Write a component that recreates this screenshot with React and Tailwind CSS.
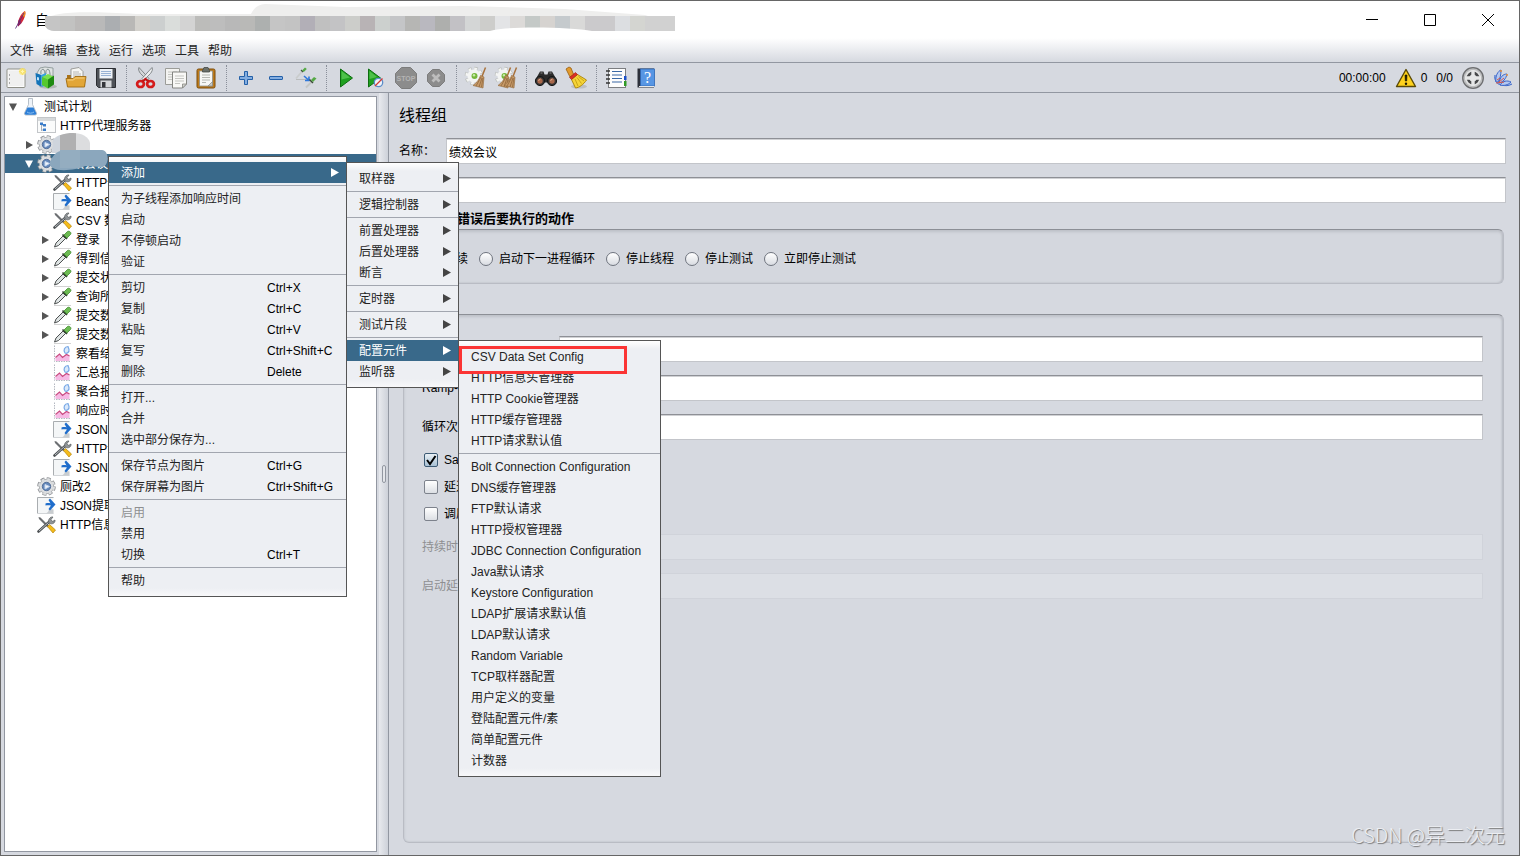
import React from 'react';

// ---------- Toolbar icons (24 x 24) ----------

const NewIcon = () => (
    <>
        <rect x="3" y="3" width="18" height="18.5" rx="1" fill="#fdfdfd" stroke="#8f9088" />
        <rect x="4.5" y="4.5" width="15" height="15.5" fill="#f0f0f0" />
        <path d="M5.5 8v2M5.5 12v2M5.5 16v2" stroke="#aaa" />
        <circle cx="18.5" cy="5.5" r="3.6" fill="#fbe97a" opacity=".8" />
        <path d="M18.5 2.5l1 2 2 1-2 1-1 2-1-2-2-1 2-1z" fill="#fff6b0" stroke="#f2d33c" strokeWidth=".6" />
    </>
);

const TemplatesIcon = () => (
    <>
        <ellipse cx="14" cy="20.5" rx="9" ry="2" fill="#9aa09a" opacity=".6" />
        <path d="M3 7l3-5 5-1 8 1v8H4z" fill="#dfe3e3" stroke="#84908f" strokeWidth=".8" />
        <path d="M7 8c-1-4 2-6 3-4s1 4 1 5M12 8c-1-4 2-6 3-4s1 4 1 5" fill="none" stroke="#7c8a8c" strokeWidth="1" />
        <path d="M1.500 7l6 2v12l-5-3z" fill="#1273b8" />
        <path d="M7 9l5-2v12l-4 2z" fill="#38a3e0" />
        <path d="M3 11l2 .6v3L3 14z" fill="#bfe2f8" />
        <path d="M8 11l6-3 6 3-6 3z" fill="#7be04e" />
        <path d="M8 11l6 2.500v9L8 19z" fill="#55c92d" />
        <path d="M14 13.500l6-4v9l-6 4z" fill="#1e8a12" />
    </>
);

const OpenIcon = () => (
    <>
        <path d="M3 9h6l1 2h11v9H3z" fill="#a9721a" />
        <path d="M7 3l8-1.500 4 4V15H7z" fill="#f6f6f4" stroke="#8b8b86" strokeWidth=".8" />
        <path d="M9 6h6M9 8h8M9 10h8" stroke="#a8a8a4" strokeWidth=".8" />
        <path d="M2 12.500h7l2-2h11l-1.500 10.500H3.500z" fill="#e2a638" stroke="#a06c12" strokeWidth=".9" />
        <path d="M3.500 14h6l2-2h9" fill="none" stroke="#f6cf7c" />
    </>
);

const SaveIcon = () => (
    <>
        <path d="M2.500 2.500h19v19h-17l-2-2z" fill="#4e5258" stroke="#2c2e33" />
        <rect x="5.500" y="3" width="13" height="9.500" fill="#eff3f8" />
        <path d="M7 5.500h10M7 7.500h10M7 9.500h10" stroke="#8facd0" strokeWidth=".9" />
        <rect x="6.500" y="14.500" width="11" height="7" fill="#d5d7da" />
        <rect x="8" y="16" width="3.500" height="5.500" fill="#34363b" />
    </>
);

const CutIcon = () => (
    <>
        <path d="M5 1.500c-1 2 0 4 1.500 6l7 7 1.500-2z" fill="#d4d7d9" stroke="#6f7476" strokeWidth=".8" />
        <path d="M18 1.500c1 2 0 4-1.500 6l-7 7-1.500-2z" fill="#eceeef" stroke="#6f7476" strokeWidth=".8" />
        <ellipse cx="6.500" cy="18" rx="3.400" ry="3" fill="none" stroke="#d41c1c" strokeWidth="2.700" />
        <ellipse cx="16.500" cy="18" rx="3.400" ry="3" fill="none" stroke="#d41c1c" strokeWidth="2.700" />
        <path d="M8.500 15.500l3-2.500 3 2.500" fill="none" stroke="#c01313" strokeWidth="2.200" />
    </>
);

const CopyIcon = () => (
    <>
        <path d="M1.500 2.500h14v16h-14z" fill="#f3f3f1" stroke="#9b9c98" />
        <path d="M4 6h9M4 8.500h9M4 11h9M4 13.500h5" stroke="#c4c5c1" />
        <path d="M8.500 6h14v12l-4 4h-10z" fill="#f8f8f6" stroke="#858682" />
        <path d="M11 10h9M11 12.500h9M11 15h9M11 17.500h5" stroke="#c4c5c1" />
        <path d="M22.500 18h-4v4z" fill="#d2d3cf" stroke="#858682" strokeWidth=".8" />
    </>
);

const PasteIcon = () => (
    <>
        <rect x="3" y="3" width="18" height="19" rx="1.500" fill="#bd7b1c" stroke="#7c4c0b" />
        <path d="M5.500 5h13v15h-13z" fill="#f7f7f5" stroke="#8e8f8a" strokeWidth=".8" />
        <path d="M8.500 4.500l1.500-3h4l1.500 3v1.500h-7z" fill="#6b706b" stroke="#454944" strokeWidth=".8" />
        <path d="M8 9h8M8 11.500h8M8 14h8M8 16.500h4" stroke="#b5b7b2" />
        <path d="M18.500 15.500v4.500H14z" fill="#c6c8c3" stroke="#858782" strokeWidth=".7" />
    </>
);

const PlusIcon = () => (
    <path d="M10.500 5.500h3v5h5v3h-5v5h-3v-5h-5v-3h5z" fill="#83ade0" stroke="#2460a8" />
);

const MinusIcon = () => <rect x="5.500" y="10.500" width="13" height="3" rx=".5" fill="#83ade0" stroke="#2460a8" />;

const ToggleIcon = () => (
    <>
        <path d="M2 12.500L8 5.500" stroke="#c9cccc" strokeWidth="1.800" />
        <path d="M2 13.500h13" stroke="#b5b8b8" strokeWidth=".9" />
        <path d="M7 4l2 2" stroke="#46513f" strokeWidth="1.300" />
        <path d="M8 4.500L11 1.500l1.800 1.500-3 3z" fill="#55a945" />
        <path d="M10 10l4.500 4M15 10.500v4h-4" stroke="#2f78dc" strokeWidth="1.600" fill="none" />
        <path d="M12 21.500l5.500-5.500" stroke="#c3c6c6" strokeWidth="2" />
        <path d="M15.500 13.500l3.500 3.500" stroke="#3c4a38" strokeWidth="1.500" />
        <path d="M17 14l3-3 2.500 1.500-3.500 3.500z" fill="#55a945" />
    </>
);

const StartIcon = () => (
    <>
        <path d="M6.500 3l12 9-12 9z" fill="#1fa01f" stroke="#0e6d10" />
        <path d="M7.500 5l8.500 6.500-8.500 2z" fill="#62cf5b" opacity=".7" />
    </>
);

const StartNoTimersIcon = () => (
    <>
        <path d="M4.500 3l12 9-12 9z" fill="#1fa01f" stroke="#0e6d10" />
        <path d="M5.500 5l7.500 6-7.500 2z" fill="#62cf5b" opacity=".7" />
        <circle cx="14.500" cy="16.500" r="4.200" fill="#eef3fa" stroke="#5b8cc8" strokeWidth="1.300" />
        <path d="M11 20l7.500-7.500" stroke="#d23a32" strokeWidth="1.300" />
    </>
);

const StopIcon = () => (
    <>
        <path d="M7.500 1.500h9l6 6v9l-6 6h-9l-6-6v-9z" fill="#8c8c8c" stroke="#7c7c7c" />
        <text x="12" y="14.500" textAnchor="middle" fontSize="7" fontWeight="bold" fontFamily="Liberation Sans, sans-serif" fill="#b4b4b4">STOP</text>
    </>
);

const ShutdownIcon = () => (
    <>
        <path d="M8.500 3.500h7l5 5v7l-5 5h-7l-5-5v-7z" fill="#8c8c8c" stroke="#7c7c7c" />
        <path d="M8.500 8.500l7 7M15.500 8.500l-7 7" stroke="#bdbdbd" strokeWidth="2.800" />
    </>
);

const Broom = () => (
    <>
        <path d="M21.500 1.500l-3.500 9" stroke="#a8713a" strokeWidth="1.500" />
        <path d="M16.500 9.500l3.500 1.500-1 11-10-2.500c4-3 6-6 7.500-10z" fill="#c79a68" stroke="#8e6436" strokeWidth=".6" />
        <path d="M17 11l-5 9M18 12l-3 9M19 12l-1.500 9" stroke="#8a6136" strokeWidth=".7" />
    </>
);

const GearSmall = () => (
    <>
        <circle cx="10" cy="10" r="7.600" fill="none" stroke="#b9bcb9" strokeWidth="3.400" strokeDasharray="3.400 2.570" />
        <circle cx="10" cy="10" r="7.300" fill="none" stroke="#f4f5f4" strokeWidth="2.600" strokeDasharray="2.800 2.933" />
        <circle cx="10" cy="10" r="6.500" fill="#f3f4f3" />
        <circle cx="10.500" cy="10" r="3" fill="#77b73c" />
        <circle cx="10" cy="9.300" r="1.200" fill="#c8ecaa" />
    </>
);

const ClearIcon = () => (
    <>
        <GearSmall />
        <Broom />
    </>
);

const ClearAllIcon = () => (
    <>
        <GearSmall />
        <g transform="translate(-5 0)">
            <Broom />
        </g>
        <g transform="translate(1 0)">
            <Broom />
        </g>
    </>
);

const SearchIcon = () => (
    <>
        <path d="M6 5.500h3.500l1 3h3l1-3H18l4.500 8v3h-21v-3z" fill="#2b2b2b" />
        <path d="M6.500 7h2M15.500 7h2" stroke="#8b8b8b" strokeWidth="1.200" />
        <circle cx="6" cy="15" r="4.600" fill="#343434" stroke="#161616" />
        <circle cx="18" cy="15" r="4.600" fill="#343434" stroke="#161616" />
        <circle cx="6" cy="15" r="2.700" fill="#a8674a" />
        <circle cx="18" cy="15" r="2.700" fill="#a8674a" />
        <path d="M4.500 14.500l2-1.500M16.500 14.500l2-1.500" stroke="#e3b69c" />
    </>
);

const ClearSearchIcon = () => (
    <>
        <ellipse cx="15" cy="20.500" rx="8" ry="2" fill="#999" opacity=".4" />
        <path d="M2 3l3-2 2 1 2 5 1 2-4 2-2-4z" fill="#e39b2c" stroke="#985d10" strokeWidth=".8" />
        <path d="M7.500 13.500l6-5 9 5.500c-3 4.500-7 7.500-11 8z" fill="#f5d437" stroke="#a98208" strokeWidth=".9" />
        <path d="M11 13l3 7M13 11.500l4.500 6M14.500 10.500l5.500 4.500" stroke="#c49f15" strokeWidth=".9" />
        <path d="M5.500 11.500l6-5 2 2-6 5z" fill="#dd3022" stroke="#9b1a12" strokeWidth=".6" />
    </>
);

const FunctionIcon = () => (
    <>
        <rect x="4.500" y="2.500" width="17" height="19" fill="#fdfdfd" stroke="#7b7d80" />
        <path d="M8 5.500h10M8 9h10M8 12.500h10M8 16h10" stroke="#3b69a5" strokeWidth="1.100" />
        <path d="M2 5h4M2 9h4M2 13h4M2 17h4" stroke="#333" strokeWidth="1.700" />
        <rect x="20" y="10" width="2.500" height="4" fill="#1c50c8" />
        <rect x="20" y="15" width="2.500" height="5" fill="#2f9a25" />
    </>
);

const HelpIcon = () => (
    <>
        <path d="M3.500 2.500h16.500v19H3.500z" fill="#2d303a" />
        <rect x="6.500" y="3" width="14" height="17" fill="#5796e4" stroke="#2e66b4" strokeWidth=".8" />
        <path d="M5 20.500h15" stroke="#e8e8e8" />
        <text x="13.500" y="17" textAnchor="middle" fontSize="16" fontFamily="Liberation Serif, serif" fill="#fff">?</text>
    </>
);

const WarningIcon = () => (
    <>
        <path d="M12 3.500L21.500 20.500h-19z" fill="#ffd21c" stroke="#5a4a06" strokeWidth="1.400" strokeLinejoin="round" />
        <path d="M11 9h2l-.3 6h-1.400z" fill="#1d1900" stroke="#1d1900" strokeWidth=".6" />
        <circle cx="12" cy="17.800" r="1.200" fill="#1d1900" />
    </>
);

const StatusIcon = () => (
    <>
        <circle cx="12" cy="12" r="10.300" fill="#bcbdbe" stroke="#6d6e70" strokeWidth="1.300" />
        <circle cx="12" cy="12" r="8" fill="#e2e3e3" />
        <circle cx="12" cy="12" r="5" fill="none" stroke="#48494b" strokeWidth="2.800" />
        <path d="M12 4v16M4 12h16" stroke="#e6e7e7" strokeWidth="3.400" />
    </>
);

const FeatherIcon = () => (
    <>
        <path d="M4 9c-1 4 1 9 6 10 4 1 8 1 11-1" fill="#9db8ec" stroke="#3d67c8" />
        <path d="M5 16C4 10 7 5 10 4c0 5-1 9-3 12zM8 17c1-6 4-9 8-9-1 5-4 8-8 9zM9 19c3-4 7-5 11-3-3 3-7 4-11 3z" fill="#b4c8f0" stroke="#3d67c8" />
        <path d="M6 14l3-2M8 16l5-4M5 17l8-1" stroke="#d8574a" />
        <circle cx="10" cy="5" r="1" fill="#e9903c" />
        <circle cx="16" cy="9" r="1" fill="#e9903c" />
    </>
);

const TOOLBAR = [
    [
        { label: '新建', icon: NewIcon },
        { label: '模板', icon: TemplatesIcon },
        { label: '打开', icon: OpenIcon },
        { label: '保存', icon: SaveIcon },
    ],
    [
        { label: '剪切', icon: CutIcon },
        { label: '复制', icon: CopyIcon },
        { label: '粘贴', icon: PasteIcon },
    ],
    [
        { label: '展开', icon: PlusIcon },
        { label: '折叠', icon: MinusIcon },
        { label: '切换', icon: ToggleIcon },
    ],
    [
        { label: '启动', icon: StartIcon },
        { label: '不停顿启动', icon: StartNoTimersIcon },
        { label: '停止', icon: StopIcon },
        { label: '关闭', icon: ShutdownIcon },
    ],
    [
        { label: '清除', icon: ClearIcon },
        { label: '清除全部', icon: ClearAllIcon },
    ],
    [
        { label: '查找', icon: SearchIcon },
        { label: '重置查找', icon: ClearSearchIcon },
    ],
    [
        { label: '函数助手', icon: FunctionIcon },
        { label: '帮助', icon: HelpIcon },
    ],
];

// ---------- Tree icons (19 x 19) ----------

const TREE_ICONS = {
    flask: (
        <>
            <path d="M7.500 1.500h4v6l4 8.500c.5 1.500-.5 2-1.500 2H5c-1 0-2-.5-1.500-2l4-8.500z" fill="#eef3f9" stroke="#a7b1bb" strokeWidth=".8" />
            <path d="M6.500 10.500h6l2.700 5.500c.3 1-.2 1.700-1.200 1.700H5c-1 0-1.500-.7-1.200-1.700z" fill="#2e7fd6" />
            <path d="M6 15c2 1.500 5 1.500 7 0" stroke="#8bc1f5" fill="none" />
        </>
    ),
    server: (
        <>
            <rect x=".5" y="1.500" width="18" height="15" fill="#fafbfb" stroke="#c3c6c9" />
            <rect x="1" y="2" width="17" height="3" fill="#d6d9db" />
            <path d="M4.500 7v8M4.500 9h3M4.500 14h3" stroke="#a7b0ba" fill="none" />
            <rect x="3" y="6.500" width="3" height="2.500" fill="#3a7cc9" />
            <rect x="6" y="8" width="3" height="2.500" fill="#3a7cc9" />
            <rect x="6" y="12.500" width="3" height="2.500" fill="#3a7cc9" />
        </>
    ),
    gear: (
        <>
            <circle cx="9.500" cy="9.500" r="7.600" fill="none" stroke="#8f9296" strokeWidth="3.400" strokeDasharray="3.800 2.169" />
            <circle cx="9.500" cy="9.500" r="7.200" fill="#dcdee0" stroke="#a0a3a6" strokeWidth=".8" />
            <circle cx="9.500" cy="9.500" r="7.400" fill="none" stroke="#dcdee0" strokeWidth="2.200" strokeDasharray="2.800 3.012" strokeDashoffset="-.5" />
            <circle cx="9.500" cy="9.500" r="4.200" fill="#6488bb" stroke="#56719a" strokeWidth="1" />
            <path d="M8 7.500l4.500 2-4.500 2.500z" fill="#f2f6fb" stroke="#c8d8ee" />
        </>
    ),
    tools: (
        <>
            <path d="M1.500 2l2 .5L12 11l-1.500 1.500-8.500-8.500z" fill="#6c6f72" />
            <path d="M10.500 11.500l2-2 6 5.500-2.500 3z" fill="#f5bc1b" stroke="#b5830a" strokeWidth=".7" />
            <path d="M1.500 16.500L12 7" stroke="#4e5255" strokeWidth="2.600" strokeLinecap="round" />
            <path d="M2 16L12 7" stroke="#b9bec2" strokeWidth="1" />
            <path d="M12 8c-1.500-3 1-6.500 4-6l-2 2.500 1.500 2L18 5c.5 3-3 5-6 3z" fill="#8f9497" stroke="#55595c" strokeWidth=".7" />
        </>
    ),
    page: (
        <>
            <path d="M.5 1.500h16v16H.5z" fill="#f4f6f7" />
            <path d="M.5 17.500v-16h16" stroke="#a9adb0" fill="none" />
            <path d="M.5 17.500h16" stroke="#d2d5d8" />
            <path d="M9 17.500c2-1 3-3 3-5l4.500 1v4z" fill="#c9cdd0" />
            <path d="M8.500 7.500c2-.6 4-.5 5 0L11.500 4l1.500-1.500L18.500 8.500 13 14.500 11.500 13l2.500-3.500c-2-.4-4-.3-5.500 0z" fill="#1f6dcb" />
        </>
    ),
    dropper: (
        <>
            <path d="M1 18.500h17" stroke="#c8c8c8" strokeWidth=".8" />
            <path d="M1.500 17l1.500-4 7-7 2.500 2.500-7 7z" fill="#dfe4e4" stroke="#4d5151" strokeWidth="1" />
            <path d="M9.500 4.500l4.500 4.500" stroke="#33422f" strokeWidth="1.600" />
            <path d="M11 5l3.500-3.500c1.500-1 4.500 1 3 3L14 8z" fill="#6dbb53" stroke="#3f8a2d" strokeWidth=".8" />
        </>
    ),
    chart: (
        <>
            <path d="M1.500 1.500v16h16" stroke="#b4b8c1" strokeDasharray="1.500 1" fill="none" />
            <path d="M2.500 14l4-3.500 3 3 4-4 3 2v5.500h-14z" fill="#f6b9e4" />
            <path d="M2.500 13.500l4-3.500 3 3.500 4-3 3 1.500" stroke="#c94a80" strokeWidth="1.200" fill="none" />
            <path d="M15 2.500c-3.500 0-5 4-3 6.500 2 1 4.500-1 4-3.500z" fill="#dbe9fa" stroke="#7aa9e6" strokeWidth="1.200" />
        </>
    ),
};

const TREE = [
    { level: 0, arrow: 'down', icon: 'flask', text: '测试计划' },
    { level: 1, icon: 'server', text: 'HTTP代理服务器' },
    { level: 1, arrow: 'right', icon: 'gear', text: '' },
    { level: 1, arrow: 'down', icon: 'gear', text: '绩效会议', selected: true },
    { level: 2, icon: 'tools', text: 'HTTP信息头管理器' },
    { level: 2, icon: 'page', text: 'BeanShell 预处理程序' },
    { level: 2, icon: 'tools', text: 'CSV 数据文件设置' },
    { level: 2, arrow: 'right', icon: 'dropper', text: '登录' },
    { level: 2, arrow: 'right', icon: 'dropper', text: '得到信息' },
    { level: 2, arrow: 'right', icon: 'dropper', text: '提交状态' },
    { level: 2, arrow: 'right', icon: 'dropper', text: '查询所有' },
    { level: 2, arrow: 'right', icon: 'dropper', text: '提交数据' },
    { level: 2, arrow: 'right', icon: 'dropper', text: '提交数据' },
    { level: 2, icon: 'chart', text: '察看结果树' },
    { level: 2, icon: 'chart', text: '汇总报告' },
    { level: 2, icon: 'chart', text: '聚合报告' },
    { level: 2, icon: 'chart', text: '响应时间图' },
    { level: 2, icon: 'page', text: 'JSON提取器' },
    { level: 2, icon: 'tools', text: 'HTTP请求默认值' },
    { level: 2, icon: 'page', text: 'JSON提取器' },
    { level: 1, icon: 'gear', text: '厕改2' },
    { level: 1, icon: 'page', text: 'JSON提取器' },
    { level: 1, icon: 'tools', text: 'HTTP信息头管理器' },
];

const INDENT = ['pl-0', 'pl-4', 'pl-8'];

// ---------- Menus ----------

const MAIN_MENU = [
    [{ text: '添加', sub: true, active: true }],
    [{ text: '为子线程添加响应时间' }, { text: '启动' }, { text: '不停顿启动' }, { text: '验证' }],
    [
        { text: '剪切', key: 'Ctrl+X' },
        { text: '复制', key: 'Ctrl+C' },
        { text: '粘贴', key: 'Ctrl+V' },
        { text: '复写', key: 'Ctrl+Shift+C' },
        { text: '删除', key: 'Delete' },
    ],
    [{ text: '打开...' }, { text: '合并' }, { text: '选中部分保存为...' }],
    [
        { text: '保存节点为图片', key: 'Ctrl+G' },
        { text: '保存屏幕为图片', key: 'Ctrl+Shift+G' },
    ],
    [{ text: '启用', disabled: true }, { text: '禁用' }, { text: '切换', key: 'Ctrl+T' }],
    [{ text: '帮助' }],
];

const ADD_MENU = [
    [{ text: '取样器', sub: true }],
    [{ text: '逻辑控制器', sub: true }],
    [
        { text: '前置处理器', sub: true },
        { text: '后置处理器', sub: true },
        { text: '断言', sub: true },
    ],
    [{ text: '定时器', sub: true }],
    [{ text: '测试片段', sub: true }],
    [
        { text: '配置元件', sub: true, active: true },
        { text: '监听器', sub: true },
    ],
];

const CONFIG_MENU = [
    ['CSV Data Set Config', 'HTTP信息头管理器', 'HTTP Cookie管理器', 'HTTP缓存管理器', 'HTTP请求默认值'],
    [
        'Bolt Connection Configuration',
        'DNS缓存管理器',
        'FTP默认请求',
        'HTTP授权管理器',
        'JDBC Connection Configuration',
        'Java默认请求',
        'Keystore Configuration',
        'LDAP扩展请求默认值',
        'LDAP默认请求',
        'Random Variable',
        'TCP取样器配置',
        '用户定义的变量',
        '登陆配置元件/素',
        '简单配置元件',
        '计数器',
    ],
].map((group) => group.map((text) => ({ text })));

const Menu = ({ groups, className }) => (
    <div
        role="menu"
        className={`absolute border border-[#555555] py-[5px] bg-[#edeff3] bg-[linear-gradient(to_bottom,#ffffff,#edeff3_8px,#edeff3_calc(100%-8px),#f8f8fa)] ${className}`}
    >
        {groups.map((group, i) => (
            <div key={i}>
                {i > 0 && <hr className="my-0.5 border-t border-[#a2a6af]" />}
                {group.map((item) => (
                    <button
                        key={item.text}
                        type="button"
                        role="menuitem"
                        disabled={item.disabled}
                        className={`flex h-[21px] w-full items-center pl-3 pr-[7px] text-left whitespace-nowrap ${
                            item.active ? 'bg-[#39698a] text-white' : item.disabled ? 'text-[#8e8f91]' : 'text-[#232323]'
                        }`}
                    >
                        <span className={item.key ? 'w-[146px]' : 'flex-1'}>{item.text}</span>
                        {item.key && <span className="text-black">{item.key}</span>}
                        {item.sub && (
                            <svg width="8" height="9" viewBox="0 0 8 9" fill={item.active ? '#fff' : '#444'}>
                                <path d="M0 0l8 4.500-8 4.500z" />
                            </svg>
                        )}
                    </button>
                ))}
            </div>
        ))}
    </div>
);

// ---------- Window chrome ----------

// Colours of the censored strip in the title, one per 15px cell
const MOSAIC = [
    '#c5c5c5', '#c2c2c1', '#bcbab9', '#b9b9b9', '#abaeb1', '#b9b8b6', '#d3d1cc', '#cccfcf', '#dadddb', '#d3d3d3',
    '#bcbcba', '#bdbdbd', '#b8b8b8', '#b9b9b7', '#adb0af', '#c5c5c5', '#c3c3c3', '#b2afb7', '#c0c0c0', '#c3c3c5',
    '#cccdca', '#b8b3b5', '#ccd0ce', '#c4c5c7', '#b6b6b4', '#b9b8bf', '#aeafad', '#c2c1c5', '#d4d6d6', '#cdcdcb',
    '#e3e4e6', '#dcdad8', '#c4c9c7', '#d6d3d0', '#c5cacd', '#d9d9d8', '#cbcacc', '#cbcacc', '#dcdee1', '#d4d5d1',
    '#d1d1d1', '#d1d1d1',
];

const TitleBar = () => (
    <header className="flex h-[37px] items-center bg-white pl-3 pr-0.5">
        <svg width="14" height="20" viewBox="0 0 14 20" aria-hidden="true">
            <path d="M12 1c1 3-1 9-3.500 12L5 16.500C4 12 7 4 12 1z" fill="#d02a3c" />
            <path d="M12 1c1 2 .5 4-.5 6.500L9 5c1-2 2-3 3-4z" fill="#f08a26" />
            <path d="M5 16.500C4.500 14 5 11 6.500 8.500l2 4.500z" fill="#8c2260" />
            <path d="M11 3L2.500 18.500" stroke="#5c2b7a" strokeWidth=".9" />
        </svg>
        <h1 className="ml-2 text-sm text-black">自</h1>
        <svg className="-ml-[5px]" width="636" height="36" viewBox="44 1 636 36" aria-hidden="true">
            <clipPath id="smear">
                <path d="M50 13h625v17H592c-20-4-80-5-98-1l-4 1H54c-13 0-12-17-4-17z" />
            </clipPath>
            <path d="M44 20c6-10 40-10 92-7l115 0c4-8 8-9 14-10l80 3 120-1 100 3 80 6 12 4H50z" fill="#eeeeed" />
            <g clipPath="url(#smear)">
                {MOSAIC.map((color, i) => (
                    <rect key={i} x={45 + i * 15} y="15" width="15" height="15" fill={color} />
                ))}
            </g>
        </svg>
        <div className="ml-auto flex h-full text-black">
            <button type="button" aria-label="最小化" className="flex w-[58px] items-center justify-center">
                <svg width="12" height="12" fill="none" stroke="currentColor"><path d="M0 5.500h12" /></svg>
            </button>
            <button type="button" aria-label="最大化" className="flex w-[58px] items-center justify-center">
                <svg width="12" height="12" fill="none" stroke="currentColor"><path d="M.5 .5h11v11H.5z" /></svg>
            </button>
            <button type="button" aria-label="关闭" className="flex w-[58px] items-center justify-center">
                <svg width="12" height="12" fill="none" stroke="currentColor"><path d="M0 0l12 12M12 0L0 12" /></svg>
            </button>
        </div>
    </header>
);

const MenuBar = () => (
    <nav className="flex h-[25px] items-center gap-[9px] border-b border-[#9297a1] bg-linear-to-b from-white to-[#d6d9e0] pl-[9px] pt-0.5">
        {['文件', '编辑', '查找', '运行', '选项', '工具', '帮助'].map((name) => (
            <button key={name} type="button" className="text-[#232323]">{name}</button>
        ))}
    </nav>
);

const Toolbar = () => (
    <div className="flex h-[30px] items-center border-b border-[#9297a1]">
        {TOOLBAR.map((group, i) => (
            <React.Fragment key={i}>
                {i > 0 && <div className="ml-[5px] mr-1 h-[26px] w-px border-l border-dotted border-[#8a8f9a]" />}
                {group.map(({ label, icon: Icon }) => (
                    <button key={label} type="button" aria-label={label} className="flex w-[30px] justify-center">
                        <svg width="24" height="24" viewBox="0 0 24 24" fill="none"><Icon /></svg>
                    </button>
                ))}
            </React.Fragment>
        ))}
        <div className="ml-auto flex items-center pr-1 text-black">
            <span>00:00:00</span>
            <button type="button" aria-label="警告" className="ml-2 flex items-center gap-[3px]">
                <svg width="24" height="24" viewBox="0 0 24 24" fill="none"><WarningIcon /></svg>
                0
            </button>
            <span className="ml-[9px] mr-2">0/0</span>
            <svg width="24" height="24" viewBox="0 0 24 24" fill="none"><StatusIcon /></svg>
            <svg className="ml-1.5" width="24" height="24" viewBox="0 0 24 24" fill="none"><FeatherIcon /></svg>
        </div>
    </div>
);

const TreePanel = () => (
    <aside className="relative w-[373px] shrink-0 overflow-hidden border border-[#9297a1] bg-white">
        <ul>
            {TREE.map((node, i) => (
                <li
                    key={i}
                    className={`flex h-[19px] items-center whitespace-nowrap ${
                        node.selected ? 'bg-[#39698a] text-white' : 'text-black'
                    } ${INDENT[node.level]}`}
                >
                    <span className="flex w-4 justify-center">
                        {node.arrow && (
                            <svg width="8" height="8" viewBox="0 0 8 8" fill={node.selected ? '#fff' : '#555'}>
                                <path d={node.arrow === 'down' ? 'M0 .5h8L4 8z' : 'M1 0l7 4-7 4z'} />
                            </svg>
                        )}
                    </span>
                    <svg className="mr-1 shrink-0" width="19" height="19" viewBox="0 0 19 19" fill="none">{TREE_ICONS[node.icon]}</svg>
                    {node.text}
                </li>
            ))}
        </ul>
        {/* Smudges over the private names */}
        <svg className="absolute left-[43px] top-[35px]" width="62" height="42" viewBox="0 0 62 42" aria-hidden="true">
            <clipPath id="nameSmear">
                <path d="M5 8c4-5 12-7 20-7 9 0 16 4 17 10v10H4z" />
            </clipPath>
            <g clipPath="url(#nameSmear)">
                <rect width="62" height="42" fill="#dcdddf" />
                <rect width="12" height="42" fill="#cfd5dd" />
                <rect x="12" width="16" height="42" fill="#b0b0b1" />
            </g>
            <path d="M4 26c4-7 9-8 16-8h34c7 0 8 16 0 17l-17-1c-8 4-26 6-32 2-4-2-4-6-1-10z" fill="#8ba7bd" />
            <path d="M12 18h20v18H12z" fill="#94adc0" />
        </svg>
    </aside>
);

const Divider = () => (
    <div className="ml-0.5 flex w-2.5 shrink-0 items-center justify-center border-r border-[#9297a1] bg-linear-to-r from-[#e8eaee] to-[#cdd1d9]">
        <span className="h-[18px] w-1 rounded-sm border border-[#9297a1] bg-[#e4e6ea]" />
    </div>
);

// ---------- Form ----------

const inputClass =
    'h-[26px] min-w-0 flex-1 border border-[#c3c5ca] border-t-[#8e9096] bg-white px-0.5 text-black shadow-[inset_0_1px_0_#d0d1d4] disabled:border-[#d0d3da] disabled:bg-[#dcdfe5] disabled:shadow-none';

const Field = ({ id, label, value, labelClass, disabled }) => (
    <div className="flex h-[26px] items-center">
        <label htmlFor={id} className={`shrink-0 ${labelClass} ${disabled ? 'text-[#8e8f91]' : 'text-black'}`}>{label}</label>
        <input id={id} type="text" defaultValue={value} disabled={disabled} className={inputClass} />
    </div>
);

const Radio = ({ label, checked }) => (
    <label className="flex items-center gap-1.5">
        <input
            type="radio"
            name="onError"
            defaultChecked={checked}
            className="size-3.5 appearance-none rounded-full border border-[#6f747e] bg-linear-to-b from-white to-[#d9dce2]"
        />
        {label}
    </label>
);

const Checkbox = ({ label, checked }) => (
    <label className="relative flex items-center gap-1.5">
        <input
            type="checkbox"
            defaultChecked={checked}
            className="size-3.5 appearance-none rounded-xs border border-[#7d828c] bg-linear-to-b from-white to-[#dcdfe4] checked:border-[#3c5a74] checked:from-[#e9f0f5] checked:to-[#a8c0d3]"
        />
        {checked && (
            <svg className="pointer-events-none absolute left-0.5" width="11" height="11" viewBox="0 0 11 11" fill="none" stroke="#000" strokeWidth="2">
                <path d="M1 5l3 4L9.500 1" />
            </svg>
        )}
        {label}
    </label>
);

const groupClass = 'rounded-md border border-[#b9bcc4] border-t-[#8c8f96] shadow-[inset_0_2px_3px_#bfc2c9,inset_-1px_0_2px_#b4b7be]';

const ThreadGroupForm = () => (
    <main className="flex min-w-0 flex-1 flex-col pb-3 pl-2.5 pr-[13px] pt-[13px] text-black">
        <h2 className="text-base leading-5">线程组</h2>
        <div className="mt-3 flex flex-col gap-[13px]">
            <Field id="name" label="名称：" value="绩效会议" labelClass="w-[47px]" />
            <Field id="comment" label="注释：" value="" labelClass="w-[47px]" />
        </div>

        <h3 className="ml-1.5 mt-1.5 text-[13px] font-bold leading-5">在取样器错误后要执行的动作</h3>
        <div className={`ml-1 mr-0.5 flex h-[55px] items-center gap-[11px] bg-[#d4d7de] pl-5 pt-1 ${groupClass}`}>
            <Radio label="继续" checked />
            <Radio label="启动下一进程循环" />
            <Radio label="停止线程" />
            <Radio label="停止测试" />
            <Radio label="立即停止测试" />
        </div>

        <h3 className="ml-1.5 mt-2.5 text-[13px] font-bold leading-5">线程属性</h3>
        <div className={`ml-1 mr-0.5 flex flex-1 flex-col bg-[#d6d9e0] pl-[18px] pr-5 pt-[21px] ${groupClass}`}>
            <div className="flex flex-col gap-[13px]">
                <Field id="threads" label="线程数：" value="" labelClass="w-[137px]" />
                <Field id="rampUp" label="Ramp-Up时间（秒）：" value="" labelClass="w-[137px]" />
                <Field id="loops" label="循环次数" value="" labelClass="w-[137px]" />
            </div>
            <div className="ml-0.5 mt-2.5 flex flex-col gap-[7px] leading-5">
                <Checkbox label="Same user on each iteration" checked />
                <Checkbox label="延迟创建线程直到需要" />
                <Checkbox label="调度器" />
            </div>
            <div className="mt-2.5 flex flex-col gap-[13px]">
                <Field id="duration" label="持续时间（秒）" value="" labelClass="w-[137px]" disabled />
                <Field id="delay" label="启动延迟（秒）" value="" labelClass="w-[137px]" disabled />
            </div>
        </div>
    </main>
);

const App = () => {
    return (
        <div className="relative flex min-h-screen flex-col overflow-hidden border border-[#666666] bg-[#d6d9e0] font-['Liberation_Sans','Noto_Sans_CJK_SC',sans-serif] text-xs">
            <TitleBar />
            <MenuBar />
            <Toolbar />
            <div className="flex flex-1 pl-[3px]">
                <div className="flex pb-[3px] pt-[3px]">
                    <TreePanel />
                </div>
                <Divider />
                <ThreadGroupForm />
            </div>

            {/* Open context menu with its two submenus */}
            <Menu groups={MAIN_MENU} className="left-[107px] top-[155px] w-[239px]" />
            <Menu groups={ADD_MENU} className="left-[345px] top-[161px] w-[113px]" />
            <Menu groups={CONFIG_MENU} className="left-[457px] top-[339px] w-[203px]" />
            <div className="pointer-events-none absolute left-[458px] top-[345px] h-7 w-[168px] border-3 border-[#fb3434]" />

            <p className="pointer-events-none absolute bottom-1.5 right-3.5 font-['Noto_Sans_CJK_SC',sans-serif] text-xl font-light text-[#eceef2] [text-shadow:1px_1px_1px_#777]">
                CSDN @异二次元
            </p>
        </div>
    );
};

export default App;
